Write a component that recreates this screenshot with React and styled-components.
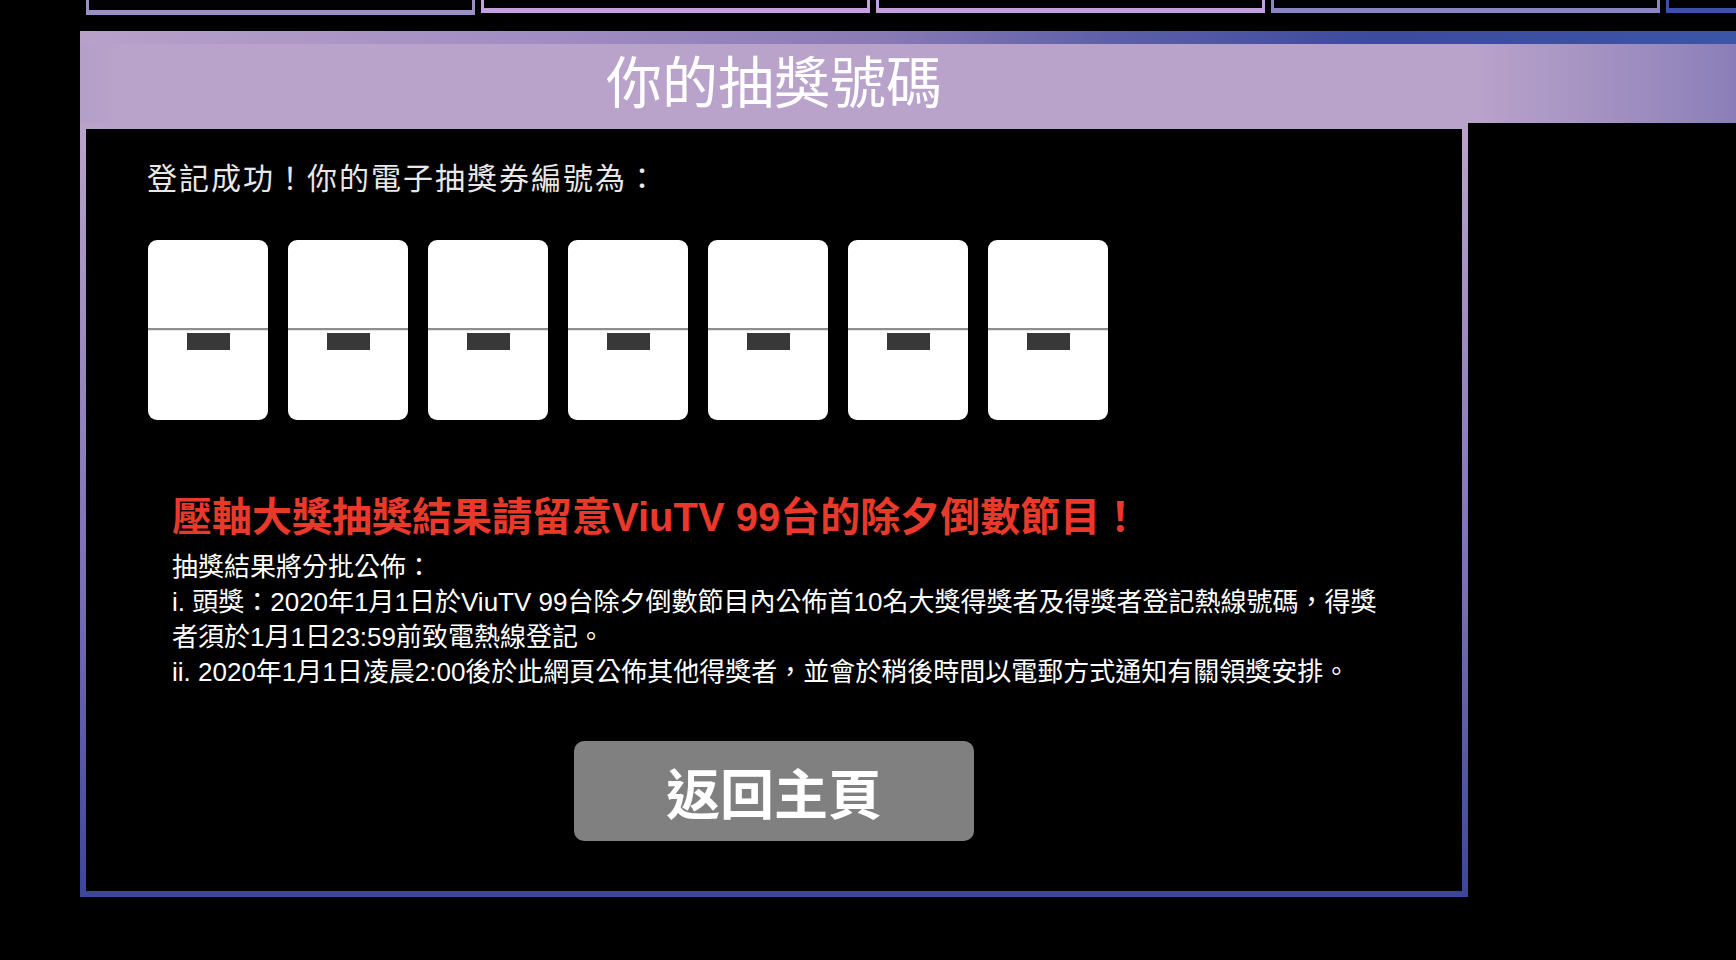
import React from 'react'
import styled, { createGlobalStyle } from 'styled-components'

const GlobalStyle = createGlobalStyle`
  html, body {
    margin: 0;
    padding: 0;
    background: #000;
  }
  body {
    font-family: "Liberation Sans", "Noto Sans CJK TC", sans-serif;
    color: #fff;
  }
`

const Page = styled.div`
  width: 1736px;
  height: 960px;
  overflow: hidden;
  padding-left: 80px;
  box-sizing: border-box;
  background: #000;
`

// 上方活動卡片列（只露出底部）
const TopRow = styled.div`
  display: flex;
  align-items: flex-end;
  gap: 6px;
  height: 15px;
  margin-left: 6px;
  margin-bottom: 16px;
  overflow: hidden;
`

const TopCard = styled.div`
  flex: 0 0 389px;
  height: 60px;
  box-sizing: border-box;
  background: #020205;
  border: 3px solid ${props => props.color};
  border-bottom-width: ${props => props.bottom || 5}px;
  margin-bottom: ${props => props.lift || 0}px;
`

const Header = styled.div`
  display: flex;
  flex-direction: column;
`

const GlowStrip = styled.div`
  height: 13px;
  background: linear-gradient(
    to right,
    #b8a1c9 0%,
    #a08dc2 28%,
    #8a7bb5 48%,
    #5d60a9 62%,
    #3d4a9e 78%,
    #3c55a7 100%
  );
`

const Band = styled.div`
  height: 79px;
  background: linear-gradient(
    to right,
    #b49fc8 0%,
    #baa3cb 3%,
    #baa3cb 84%,
    #a996c4 90%,
    #8b7eb8 100%
  );
`

const BandTitle = styled.h1`
  width: 1388px;
  margin: 0;
  text-align: center;
  font-size: 56px;
  font-weight: 400;
  line-height: 79px;
  color: #fff;
`

const Panel = styled.div`
  width: 1388px;
  box-sizing: border-box;
  background: #000;
  border: 6px solid transparent;
  border-image: linear-gradient(to bottom, #baa3cb 0%, #9a88c0 30%, #7a6fb2 60%, #3d4799 100%) 1;
  padding: 30px 0 50px;
  display: flex;
  flex-direction: column;
`

const Lead = styled.p`
  margin: 0 0 0 61px;
  font-size: 30px;
  line-height: 40px;
  letter-spacing: 2px;
  color: #e8e8e8;
`

const SlotRow = styled.div`
  display: flex;
  gap: 20px;
  margin: 41px 0 0 62px;
`

// 號碼格：上下兩半，中間一條分隔線
const Slot = styled.div`
  width: 120px;
  height: 180px;
  background: #fff;
  border-radius: 9px;
  display: flex;
  flex-direction: column;
  overflow: hidden;
`

const SlotTop = styled.div`
  height: 88px;
`

const SlotBottom = styled.div`
  flex: 1;
  border-top: 2px solid #8e8e8e;
  box-shadow: inset 0 1px 0 #e4e4e4;
  display: flex;
  justify-content: center;
  padding-top: 3px;
`

const Dash = styled.div`
  width: 43px;
  height: 17px;
  background: #383838;
`

const Notice = styled.div`
  margin: 72px 0 0 86px;
  width: 1215px;
`

const Headline = styled.h2`
  margin: 0 0 8px;
  font-size: 40px;
  font-weight: 700;
  line-height: 50px;
  color: #e8392b;
`

const NoticeLine = styled.p`
  margin: 0;
  font-size: 26px;
  line-height: 35px;
  color: #fff;
`

const HomeButton = styled.button`
  align-self: center;
  margin-top: 51px;
  width: 400px;
  height: 100px;
  border: none;
  border-radius: 10px;
  background: #808080;
  color: #fff;
  font-family: "Liberation Sans", "Noto Sans CJK TC", sans-serif;
  font-size: 54px;
  font-weight: 700;
  cursor: pointer;
`

const topCards = [
  { color: '#9b8fc6', bottom: 5, lift: 0 },
  { color: '#c5a0de', bottom: 5, lift: 2 },
  { color: '#c3a0dd', bottom: 5, lift: 2 },
  { color: '#8a86c6', bottom: 5, lift: 2 },
  { color: '#3e4fa8', bottom: 5, lift: 2 },
]

const slots = [0, 1, 2, 3, 4, 5, 6]

export default function App() {
  return (
    <Page>
      <GlobalStyle />
      <TopRow>
        {topCards.map((card, index) => (
          <TopCard key={index} color={card.color} bottom={card.bottom} lift={card.lift} />
        ))}
      </TopRow>

      <Header>
        <GlowStrip />
        <Band>
          <BandTitle>你的抽獎號碼</BandTitle>
        </Band>
      </Header>

      <Panel>
        <Lead>登記成功！你的電子抽獎券編號為：</Lead>

        <SlotRow>
          {slots.map(index => (
            <Slot key={index}>
              <SlotTop />
              <SlotBottom>
                <Dash />
              </SlotBottom>
            </Slot>
          ))}
        </SlotRow>

        <Notice>
          <Headline>壓軸大獎抽獎結果請留意ViuTV 99台的除夕倒數節目！</Headline>
          <NoticeLine>抽獎結果將分批公佈：</NoticeLine>
          <NoticeLine>
            i. 頭獎：2020年1月1日於ViuTV 99台除夕倒數節目內公佈首10名大獎得獎者及得獎者登記熱線號碼，得獎者須於1月1日23:59前致電熱線登記。
          </NoticeLine>
          <NoticeLine>
            ii. 2020年1月1日凌晨2:00後於此網頁公佈其他得獎者，並會於稍後時間以電郵方式通知有關領獎安排。
          </NoticeLine>
        </Notice>

        <HomeButton>返回主頁</HomeButton>
      </Panel>
    </Page>
  )
}
